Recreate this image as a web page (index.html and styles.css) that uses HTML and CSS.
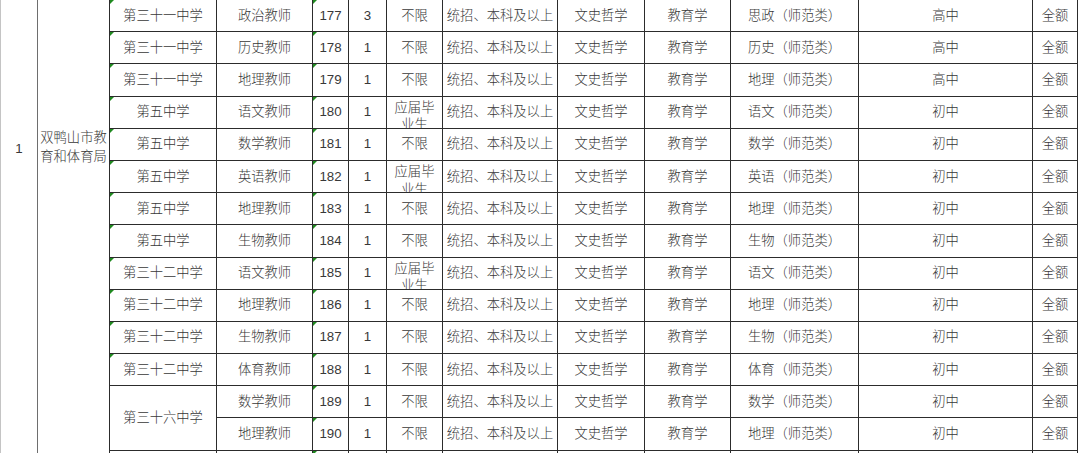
FILE: index.html
```html
<!DOCTYPE html>
<html lang="zh-CN">
<head>
<meta charset="utf-8">
<title>招聘岗位表</title>
<link rel="stylesheet" href="styles.css">
</head>
<body>
<div class="sheet">
  <div class="c idx">1</div>
  <div class="c unit">双鸭山市教<br>育和体育局</div>

  <div class="c tick">第三十一中学</div><div class="c">政治教师</div><div class="c tick">177</div><div class="c">3</div><div class="c">不限</div><div class="c">统招、本科及以上</div><div class="c">文史哲学</div><div class="c">教育学</div><div class="c">思政（师范类）</div><div class="c">高中</div><div class="c">全额</div>

  <div class="c tick">第三十一中学</div><div class="c">历史教师</div><div class="c tick">178</div><div class="c">1</div><div class="c">不限</div><div class="c">统招、本科及以上</div><div class="c">文史哲学</div><div class="c">教育学</div><div class="c">历史（师范类）</div><div class="c">高中</div><div class="c">全额</div>

  <div class="c tick">第三十一中学</div><div class="c">地理教师</div><div class="c tick">179</div><div class="c">1</div><div class="c">不限</div><div class="c">统招、本科及以上</div><div class="c">文史哲学</div><div class="c">教育学</div><div class="c">地理（师范类）</div><div class="c">高中</div><div class="c">全额</div>

  <div class="c tick">第五中学</div><div class="c">语文教师</div><div class="c tick">180</div><div class="c">1</div><div class="c wrap">应届毕<br>业生</div><div class="c">统招、本科及以上</div><div class="c">文史哲学</div><div class="c">教育学</div><div class="c">语文（师范类）</div><div class="c">初中</div><div class="c">全额</div>

  <div class="c tick">第五中学</div><div class="c">数学教师</div><div class="c tick">181</div><div class="c">1</div><div class="c">不限</div><div class="c">统招、本科及以上</div><div class="c">文史哲学</div><div class="c">教育学</div><div class="c">数学（师范类）</div><div class="c">初中</div><div class="c">全额</div>

  <div class="c tick">第五中学</div><div class="c">英语教师</div><div class="c tick">182</div><div class="c">1</div><div class="c wrap">应届毕<br>业生</div><div class="c">统招、本科及以上</div><div class="c">文史哲学</div><div class="c">教育学</div><div class="c">英语（师范类）</div><div class="c">初中</div><div class="c">全额</div>

  <div class="c tick">第五中学</div><div class="c">地理教师</div><div class="c tick">183</div><div class="c">1</div><div class="c">不限</div><div class="c">统招、本科及以上</div><div class="c">文史哲学</div><div class="c">教育学</div><div class="c">地理（师范类）</div><div class="c">初中</div><div class="c">全额</div>

  <div class="c tick">第五中学</div><div class="c">生物教师</div><div class="c tick">184</div><div class="c">1</div><div class="c">不限</div><div class="c">统招、本科及以上</div><div class="c">文史哲学</div><div class="c">教育学</div><div class="c">生物（师范类）</div><div class="c">初中</div><div class="c">全额</div>

  <div class="c tick">第三十二中学</div><div class="c">语文教师</div><div class="c tick">185</div><div class="c">1</div><div class="c wrap">应届毕<br>业生</div><div class="c">统招、本科及以上</div><div class="c">文史哲学</div><div class="c">教育学</div><div class="c">语文（师范类）</div><div class="c">初中</div><div class="c">全额</div>

  <div class="c tick">第三十二中学</div><div class="c">地理教师</div><div class="c tick">186</div><div class="c">1</div><div class="c">不限</div><div class="c">统招、本科及以上</div><div class="c">文史哲学</div><div class="c">教育学</div><div class="c">地理（师范类）</div><div class="c">初中</div><div class="c">全额</div>

  <div class="c tick">第三十二中学</div><div class="c">生物教师</div><div class="c tick">187</div><div class="c">1</div><div class="c">不限</div><div class="c">统招、本科及以上</div><div class="c">文史哲学</div><div class="c">教育学</div><div class="c">生物（师范类）</div><div class="c">初中</div><div class="c">全额</div>

  <div class="c tick">第三十二中学</div><div class="c">体育教师</div><div class="c tick">188</div><div class="c">1</div><div class="c">不限</div><div class="c">统招、本科及以上</div><div class="c">文史哲学</div><div class="c">教育学</div><div class="c">体育（师范类）</div><div class="c">初中</div><div class="c">全额</div>

  <div class="c span2">第三十六中学</div><div class="c">数学教师</div><div class="c tick">189</div><div class="c">1</div><div class="c">不限</div><div class="c">统招、本科及以上</div><div class="c">文史哲学</div><div class="c">教育学</div><div class="c">数学（师范类）</div><div class="c">初中</div><div class="c">全额</div>

  <div class="c">地理教师</div><div class="c tick">190</div><div class="c">1</div><div class="c">不限</div><div class="c">统招、本科及以上</div><div class="c">文史哲学</div><div class="c">教育学</div><div class="c">地理（师范类）</div><div class="c">初中</div><div class="c">全额</div>

  <div class="c tail"></div><div class="c tail"></div><div class="c tail tick"></div><div class="c tail"></div><div class="c tail"></div><div class="c tail"></div><div class="c tail"></div><div class="c tail"></div><div class="c tail"></div><div class="c tail"></div><div class="c tail"></div>
</div>
</body>
</html>
```

FILE: styles.css
```css
html, body {
  margin: 0;
  padding: 0;
  background: #ffffff;
  height: 453px;
  overflow: hidden;
}

.sheet {
  display: grid;
  grid-template-columns: 37px 72px 107px 96px 36px 38px 56px 115px 87px 86px 128px 174px 45px;
  grid-template-rows: repeat(14, 32.2px) 20px;
  width: max-content;
  border-left: 1px solid #c4c4c4;
  font-family: "Liberation Sans", "Noto Sans CJK SC", sans-serif;
  font-size: 13.3px;
  font-weight: 300;
  color: #383838;
}

.c {
  position: relative;
  box-sizing: border-box;
  border-right: 1px solid #2c2c2c;
  border-bottom: 1px solid #2c2c2c;
  display: flex;
  align-items: center;
  justify-content: center;
  text-align: center;
  white-space: nowrap;
  overflow: hidden;
  line-height: 18px;
}

.idx {
  grid-row: 1 / -1;
  border-right-color: #6e6e6e;
  border-bottom: none;
  align-items: flex-start;
  padding-top: 140px;
}

.unit {
  grid-row: 1 / -1;
  border-bottom: none;
  align-items: flex-start;
  padding-top: 129px;
  line-height: 18.5px;
}

.span2 {
  grid-row: span 2;
}

.wrap {
  align-items: flex-start;
  line-height: 17.6px;
  padding-top: 2px;
}

.tail {
  border-bottom: none;
}

.tick::before {
  content: "";
  position: absolute;
  left: 0;
  top: 0;
  width: 0;
  height: 0;
  border-top: 4px solid #1f8a1f;
  border-right: 4px solid transparent;
}
```
